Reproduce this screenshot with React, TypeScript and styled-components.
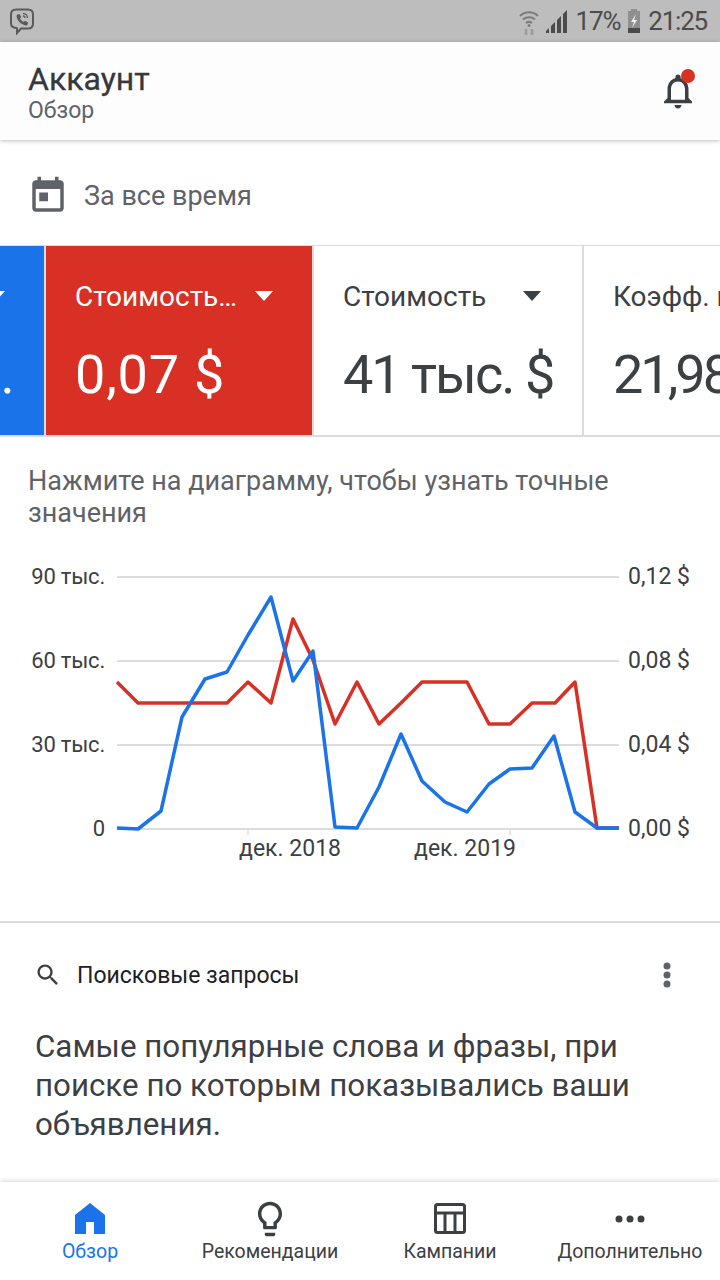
import styled, { createGlobalStyle } from "styled-components"

const GlobalStyle = createGlobalStyle`
  html, body {
    margin: 0;
    padding: 0;
    background: #fff;
  }
  * {
    box-sizing: border-box;
  }
`

const Page = styled.div`
  width: 720px;
  height: 1280px;
  display: flex;
  flex-direction: column;
  overflow: hidden;
  background: #fff;
  color: #3c4043;
  font-family: Roboto, "Noto Sans", sans-serif;
`

const StatusBar = styled.div`
  height: 42px;
  flex: none;
  display: flex;
  align-items: center;
  justify-content: space-between;
  padding: 0 13px 0 8px;
  background: #bdbdbd;
  color: #4b4b4b;
`

const StatusRight = styled.div`
  display: flex;
  align-items: center;
`

const StatusText = styled.span<{ $gap?: number }>`
  font-size: 26px;
  line-height: 42px;
  letter-spacing: -1.2px;
  margin-left: ${(p) => p.$gap ?? 0}px;
`

const Header = styled.header`
  height: 98px;
  flex: none;
  display: flex;
  align-items: center;
  justify-content: space-between;
  padding: 6px 21px 0 28px;
  background: #fdfdfd;
  box-shadow: 0 1px 4px rgba(0, 0, 0, 0.25);
  position: relative;
`

const Title = styled.div`
  font-size: 32px;
  line-height: 34px;
  font-weight: 400;
  color: #35383c;
  -webkit-text-stroke: 0.3px #35383c;
`

const Subtitle = styled.div`
  font-size: 23px;
  line-height: 30px;
  color: #5f6368;
`

const BellWrap = styled.div`
  position: relative;
  width: 42px;
  height: 42px;
  margin-top: -6px;
  color: #3c4043;
`

const BellDot = styled.span`
  position: absolute;
  top: -1px;
  right: 4px;
  width: 14px;
  height: 14px;
  border-radius: 50%;
  background: #d93025;
`

const DateRow = styled.div`
  height: 105px;
  flex: none;
  display: flex;
  align-items: center;
  gap: 15px;
  padding: 7px 0 0 27px;
  font-size: 27px;
  color: #5f6368;
`

const CardStrip = styled.div`
  height: 192px;
  flex: none;
  display: flex;
  gap: 2px;
  overflow: hidden;
  background: #dadce0;
  border-top: 1px solid #dadce0;
  border-bottom: 2px solid #dadce0;
`

const Card = styled.div<{ $bg?: string; $light?: boolean; $shift?: number; $wide?: boolean }>`
  flex: none;
  width: ${(p) => (p.$wide ? 268 : 266)}px;
  margin-left: ${(p) => p.$shift ?? 0}px;
  padding: 33px 0 0 29px;
  background: ${(p) => p.$bg ?? "#fff"};
  color: ${(p) => (p.$light ? "#fff" : "#3c4043")};
`

const CardHead = styled.div`
  display: flex;
  align-items: center;
  height: 34px;
  font-size: 28px;
  white-space: nowrap;
`

const CardTitle = styled.span`
  flex: none;
  width: 180px;
`

const Caret = styled.span`
  width: 0;
  height: 0;
  border-left: 9px solid transparent;
  border-right: 9px solid transparent;
  border-top: 10px solid currentColor;
`

const CardValue = styled.div<{ $spacing?: number }>`
  margin-top: 32px;
  font-size: 54px;
  line-height: 60px;
  letter-spacing: ${(p) => p.$spacing ?? 0.8}px;
  white-space: nowrap;
`

const Hint = styled.p`
  margin: 0;
  padding: 28px 28px 0;
  font-size: 27px;
  line-height: 32px;
  color: #5f6368;
`

const Chart = styled.svg`
  display: block;
  flex: none;
  margin-top: 27px;
  font-family: Roboto, "Noto Sans", sans-serif;
  fill: #3c4043;
`

const AxisLabel = styled.text<{ $small?: boolean }>`
  font-size: ${(p) => (p.$small ? 22 : 23)}px;
  letter-spacing: ${(p) => (p.$small ? "-0.2px" : "0")};
`

const Section = styled.section`
  flex: 1;
  min-height: 0;
  border-top: 2px solid #dadce0;
`

const SectionHead = styled.div`
  display: flex;
  align-items: center;
  height: 104px;
  padding: 0 48px 0 34px;
  font-size: 23px;
  color: #202124;
`

const SectionLabel = styled.span`
  flex: 1;
  margin-left: 15px;
`

const SectionText = styled.p`
  margin: 0;
  padding: 0 35px;
  font-size: 31.300px;
  line-height: 39px;
  color: #3c4043;
`

const BottomNav = styled.nav`
  height: 98px;
  flex: none;
  display: grid;
  grid-template-columns: repeat(4, 1fr);
  background: #fff;
  box-shadow: 0 -1px 5px rgba(0, 0, 0, 0.16);
  position: relative;
`

const NavItem = styled.div<{ $active?: boolean }>`
  display: flex;
  flex-direction: column;
  align-items: center;
  padding-top: 18px;
  font-size: 19.500px;
  line-height: 26px;
  white-space: nowrap;
  color: ${(p) => (p.$active ? "#1a73e8" : "#3c4043")};
`

const NavIcon = styled.svg`
  display: block;
  width: 38px;
  height: 38px;
  margin-bottom: 1px;
`

const gridYs = [577, 661, 745, 829]
const leftLabels = ["90 тыс.", "60 тыс.", "30 тыс.", "0"]
const rightLabels = ["0,12 $", "0,08 $", "0,04 $", "0,00 $"]

const redLine =
  "117,682 138,703 161,703 183,703 205,703 227,703 248,682 271,703 293,619 313,660 335,724 357,682 379,724 401,703 422,682 445,682 467,682 489,724 510,724 532,703 555,703 575,682 597,828 619,828"
const blueLine =
  "117,828 138,829 161,811 182,717 205,679 227,672 248,635 271,597 293,681 313,651 335,827 357,828 379,787 401,734 422,781 445,802 467,812 489,784 510,769 532,768 554,736 575,812 597,828 619,828"

// chart top is at y=556 in the page
const CHART_TOP = 556

const App = () => {
  return (
    <Page>
      <GlobalStyle />
      <StatusBar>
        <svg width="28" height="28" viewBox="0 0 28 28" fill="none" stroke="#5a5a5a" strokeWidth="2">
          <path d="M8 2.500h12c3 0 5 2 5 5v9c0 3-2 5-5 5h-7l-4 4.500v-4.700C5 20.800 3 19 3 16.500v-9c0-3 2-5 5-5z" />
          <path
            d="M9.500 7.500l2 -.5 1.800 3-1.300 1.300c.8 1.800 2 3 3.800 3.800l1.300-1.300 3 1.800-.5 2c-.4.8-1.400 1-2.300.8-4.500-1.200-7.700-4.400-8.700-8.600-.2-.9.100-1.900.9-2.300z"
            fill="#5a5a5a"
            stroke="none"
          />
          <path d="M15 6.500c2.500 0 4.500 2 4.500 4.500M15 9c1.200 0 2 .8 2 2" strokeWidth="1.300" />
        </svg>
        <StatusRight>
          <svg width="22" height="28" viewBox="0 0 22 28" fill="none" stroke="#7c7c7c" strokeWidth="2">
            <path d="M2 9c5-5 13-5 18 0M5 12.500c3.500-3 8.500-3 12 0M8 16c2-1.500 4-1.500 6 0" />
            <circle cx="11" cy="18.500" r="1.500" fill="#7c7c7c" stroke="none" />
            <path d="M8 28v-6M14 28v-6" strokeWidth="2.500" stroke="#9a9a9a" />
          </svg>
          <svg width="22" height="24" viewBox="0 0 22 24" fill="#4b4b4b" style={{ marginLeft: 6 }}>
            <path d="M0 24v-2l3-3v5zM5 24v-7l4-4v11zM11 24V11l4-4v17zM17 24V5l4-4v23z" />
          </svg>
          <StatusText $gap={8}>17%</StatusText>
          <svg width="14" height="24" viewBox="0 0 14 24" style={{ marginLeft: 7 }}>
            <path d="M4 0h6v2h3v22H1V2h3z" fill="#8f8f8f" />
            <path d="M1 19h12v5H1z" fill="#4b4b4b" />
            <path d="M9 5l-5 8h3l-2 6 5-8H7z" fill="#f2f2f2" />
          </svg>
          <StatusText $gap={7}>21:25</StatusText>
        </StatusRight>
      </StatusBar>

      <Header>
        <div>
          <Title>Аккаунт</Title>
          <Subtitle>Обзор</Subtitle>
        </div>
        <BellWrap>
          <svg width="42" height="42" viewBox="0 0 24 24" fill="currentColor">
            <path d="M12 22c1.100 0 2-.9 2-2h-4c0 1.100.9 2 2 2zm6-6v-5c0-3.070-1.630-5.640-4.500-6.320V4c0-.83-.67-1.500-1.500-1.500s-1.500.67-1.500 1.500v.68C7.640 5.360 6 7.920 6 11v5l-2 2v1h16v-1l-2-2zm-2 1H8v-6c0-2.480 1.510-4.500 4-4.500s4 2.020 4 4.500v6z" />
          </svg>
          <BellDot />
        </BellWrap>
      </Header>

      <DateRow>
        <svg width="42" height="42" viewBox="0 0 24 24" fill="#5f6368">
          <path d="M19 3h-1V1h-2v2H8V1H6v2H5c-1.110 0-1.990.9-1.990 2L3 19c0 1.100.89 2 2 2h14c1.100 0 2-.9 2-2V5c0-1.100-.9-2-2-2zm0 16H5V8h14v11zM7 10h5v5H7z" />
        </svg>
        За все время
      </DateRow>

      <CardStrip>
        <Card $bg="#1a73e8" $light $shift={-222}>
          <CardHead>
            <CardTitle>Клики</CardTitle>
            <Caret />
          </CardHead>
          <CardValue $spacing={-1}>585 тыс.</CardValue>
        </Card>
        <Card $bg="#d93025" $light>
          <CardHead>
            <CardTitle>Стоимость…</CardTitle>
            <Caret />
          </CardHead>
          <CardValue>0,07 $</CardValue>
        </Card>
        <Card $wide>
          <CardHead>
            <CardTitle>Стоимость</CardTitle>
            <Caret />
          </CardHead>
          <CardValue $spacing={-2}>41 тыс. $</CardValue>
        </Card>
        <Card>
          <CardHead>
            <CardTitle>Коэфф. конверсии</CardTitle>
          </CardHead>
          <CardValue $spacing={-3}>21,98 %</CardValue>
        </Card>
      </CardStrip>

      <Hint>Нажмите на диаграмму, чтобы узнать точные значения</Hint>

      <Chart width="720" height="365" viewBox={`0 ${CHART_TOP} 720 365`}>
        {gridYs.map((y, i) => (
          <g key={y}>
            <line x1="117" x2="619" y1={y} y2={y} stroke="#dadce0" strokeWidth="2" />
            <AxisLabel $small x="105" y={y + 7} textAnchor="end">
              {leftLabels[i]}
            </AxisLabel>
            <AxisLabel x="628" y={y + 7}>
              {rightLabels[i]}
            </AxisLabel>
          </g>
        ))}
        <line x1="248" x2="248" y1="829" y2="835" stroke="#dadce0" strokeWidth="1.500" />
        <line x1="510" x2="510" y1="829" y2="835" stroke="#dadce0" strokeWidth="1.500" />
        <AxisLabel x="290" y="856" textAnchor="middle">
          дек. 2018
        </AxisLabel>
        <AxisLabel x="465" y="856" textAnchor="middle">
          дек. 2019
        </AxisLabel>
        <polyline points={redLine} fill="none" stroke="#d93025" strokeWidth="3.500" strokeLinejoin="round" />
        <polyline points={blueLine} fill="none" stroke="#1a73e8" strokeWidth="3.500" strokeLinejoin="round" />
      </Chart>

      <Section>
        <SectionHead>
          <svg width="28" height="28" viewBox="0 0 24 24" fill="#3c4043">
            <path d="M15.500 14h-.79l-.28-.27C15.410 12.590 16 11.110 16 9.500 16 5.910 13.090 3 9.500 3S3 5.910 3 9.500 5.910 16 9.500 16c1.610 0 3.090-.59 4.230-1.570l.27.28v.79l5 4.990L20.490 19l-4.990-5zm-6 0C7.010 14 5 11.990 5 9.500S7.010 5 9.500 5 14 7.010 14 9.500 11.990 14 9.500 14z" />
          </svg>
          <SectionLabel>Поисковые запросы</SectionLabel>
          <svg width="10" height="26" viewBox="0 0 10 26" fill="#5f6368">
            <circle cx="5" cy="4" r="3.500" />
            <circle cx="5" cy="13" r="3.500" />
            <circle cx="5" cy="22" r="3.500" />
          </svg>
        </SectionHead>
        <SectionText>
          Самые популярные слова и фразы, при поиске по которым показывались ваши объявления.
        </SectionText>
      </Section>

      <BottomNav>
        <NavItem $active>
          <NavIcon viewBox="0 0 38 38" fill="currentColor">
            <path d="M19 3L4 15v19h11V22h8v12h11V15z" />
          </NavIcon>
          Обзор
        </NavItem>
        <NavItem>
          <NavIcon viewBox="2.500 1 19 22" fill="currentColor">
            <path d="M9 21c0 .5.4 1 1 1h4c.6 0 1-.5 1-1v-1H9v1zm3-19C8.100 2 5 5.100 5 9c0 2.400 1.200 4.500 3 5.700V17c0 .5.4 1 1 1h6c.6 0 1-.5 1-1v-2.300c1.800-1.300 3-3.400 3-5.700 0-3.900-3.100-7-7-7zm2.900 11.100l-.9.6V16h-4v-2.300l-.8-.6C7.800 12.200 7 10.600 7 9c0-2.800 2.200-5 5-5s5 2.200 5 5c0 1.600-.8 3.200-2.100 4.100z" />
          </NavIcon>
          Рекомендации
        </NavItem>
        <NavItem>
          <NavIcon viewBox="0 0 38 38" fill="none" stroke="currentColor" strokeWidth="3">
            <rect x="4.500" y="4.500" width="29" height="28" rx="2" />
            <path d="M4.500 13h29M14 13v19M24 13v19" />
          </NavIcon>
          Кампании
        </NavItem>
        <NavItem>
          <NavIcon viewBox="0 0 38 38" fill="currentColor">
            <circle cx="8" cy="19" r="3.500" />
            <circle cx="19" cy="19" r="3.500" />
            <circle cx="30" cy="19" r="3.500" />
          </NavIcon>
          Дополнительно
        </NavItem>
      </BottomNav>
    </Page>
  )
}

export default App
